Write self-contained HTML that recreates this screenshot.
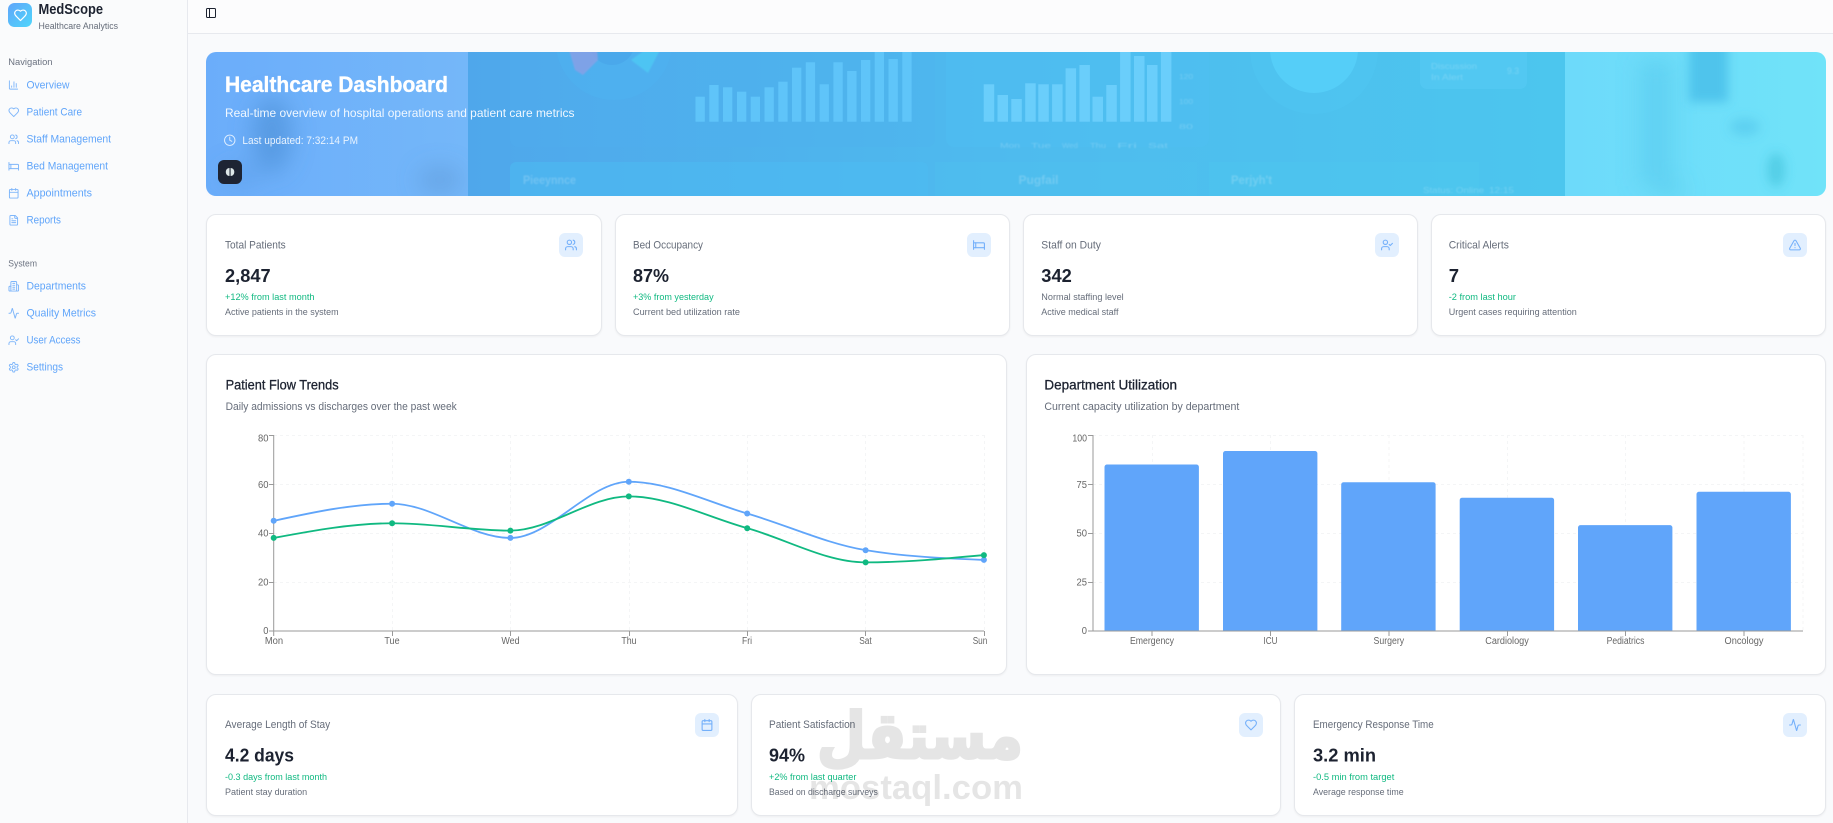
<!DOCTYPE html>
<html lang="en">
<head>
<meta charset="utf-8">
<title>MedScope - Healthcare Dashboard</title>
<style>
html,body{margin:0;padding:0;width:1833px;height:823px;overflow:hidden;background:#f9fafc;font-family:"Liberation Sans",sans-serif}
.side{position:absolute;left:0;top:0;width:187px;height:823px;background:#fafbfc;border-right:1px solid #e7e9ee}
.head{position:absolute;left:188px;top:0;width:1645px;height:33px;background:#fcfcfd;border-bottom:1px solid #e7e9ee}
.card{position:absolute;box-sizing:border-box;background:#fff;border:1px solid #e6e8ec;border-radius:10px;box-shadow:0 1px 2px rgba(0,0,0,.05)}
.b{position:absolute;width:24px;height:24px;border-radius:6px;background:#e2effe}
svg.o{position:absolute;left:0;top:0}
svg text{font-family:"Liberation Sans",sans-serif}
.nav{font-size:11.2px;fill:#60a5fa}
.sec{font-size:9.6px;fill:#6b7280}
.st{font-size:10.8px;fill:#666d7a}
.val{font-size:18.4px;font-weight:700;fill:#1c2230}
.ch{font-size:9.6px;fill:#10b981}
.ds{font-size:9.6px;fill:#666d7a}
.ct{font-size:14px;fill:#1c2230;stroke:#1c2230;stroke-width:.3}
.cs{font-size:10.6px;fill:#666d7a}
.tk{font-size:10px;fill:#666}
.i{fill:none;stroke:#60a5fa;stroke-width:2;stroke-linecap:round;stroke-linejoin:round}
.g{stroke:#f4f5f6;stroke-width:1;stroke-dasharray:3 3;fill:none}
.ax{stroke:#9a9a9a;stroke-width:1;fill:none}
</style>
</head>
<body>
<div class="side"></div>
<div class="head"></div>

<div class="card" style="left:206px;top:214px;width:396px;height:122px"></div>
<div class="card" style="left:615px;top:214px;width:395px;height:122px"></div>
<div class="card" style="left:1023px;top:214px;width:395px;height:122px"></div>
<div class="card" style="left:1431px;top:214px;width:395px;height:122px"></div>
<div class="b" style="left:559px;top:233px"></div>
<div class="b" style="left:967px;top:233px"></div>
<div class="b" style="left:1375px;top:233px"></div>
<div class="b" style="left:1783px;top:233px"></div>

<div class="card" style="left:206px;top:354px;width:801px;height:321px"></div>
<div class="card" style="left:1026px;top:354px;width:800px;height:321px"></div>

<div class="card" style="left:206px;top:694px;width:532px;height:122px"></div>
<div class="card" style="left:751px;top:694px;width:530px;height:122px"></div>
<div class="card" style="left:1294px;top:694px;width:532px;height:122px"></div>
<div class="b" style="left:695px;top:713px"></div>
<div class="b" style="left:1239px;top:713px"></div>
<div class="b" style="left:1783px;top:713px"></div>

<svg class="o" width="1833" height="823" viewBox="0 0 1833 823" xmlns="http://www.w3.org/2000/svg">
<defs>
<symbol id="chart" viewBox="0 0 24 24"><path d="M3 3v16a2 2 0 0 0 2 2h16"/><path d="M18 17V9"/><path d="M13 17V5"/><path d="M8 17v-3"/></symbol>
<symbol id="heart" viewBox="0 0 24 24"><path d="M19 14c1.49-1.46 3-3.21 3-5.5A5.5 5.5 0 0 0 16.5 3c-1.76 0-3 .5-4.5 2-1.5-1.5-2.74-2-4.5-2A5.5 5.5 0 0 0 2 8.5c0 2.3 1.5 4.05 3 5.5l7 7Z"/></symbol>
<symbol id="users" viewBox="0 0 24 24"><path d="M16 21v-2a4 4 0 0 0-4-4H6a4 4 0 0 0-4 4v2"/><circle cx="9" cy="7" r="4"/><path d="M22 21v-2a4 4 0 0 0-3-3.87"/><path d="M16 3.13a4 4 0 0 1 0 7.75"/></symbol>
<symbol id="bed" viewBox="0 0 24 24"><path d="M2 4v16"/><path d="M2 8h18a2 2 0 0 1 2 2v10"/><path d="M2 17h20"/><path d="M6 8v9"/></symbol>
<symbol id="cal" viewBox="0 0 24 24"><path d="M8 2v4"/><path d="M16 2v4"/><rect x="3" y="4" width="18" height="18" rx="2"/><path d="M3 10h18"/></symbol>
<symbol id="file" viewBox="0 0 24 24"><path d="M15 2H6a2 2 0 0 0-2 2v16a2 2 0 0 0 2 2h12a2 2 0 0 0 2-2V7Z"/><path d="M14 2v4a2 2 0 0 0 2 2h4"/><path d="M10 9H8"/><path d="M16 13H8"/><path d="M16 17H8"/></symbol>
<symbol id="bld" viewBox="0 0 24 24"><path d="M6 22V4a2 2 0 0 1 2-2h8a2 2 0 0 1 2 2v18Z"/><path d="M6 12H4a2 2 0 0 0-2 2v6a2 2 0 0 0 2 2h2"/><path d="M18 9h2a2 2 0 0 1 2 2v9a2 2 0 0 1-2 2h-2"/><path d="M10 6h4"/><path d="M10 10h4"/><path d="M10 14h4"/><path d="M10 18h4"/></symbol>
<symbol id="act" viewBox="0 0 24 24"><path d="M22 12h-2.48a2 2 0 0 0-1.93 1.46l-2.35 8.36a.25.25 0 0 1-.48 0L9.24 2.18a.25.25 0 0 0-.48 0l-2.35 8.36A2 2 0 0 1 4.49 12H2"/></symbol>
<symbol id="uchk" viewBox="0 0 24 24"><path d="M16 21v-2a4 4 0 0 0-4-4H6a4 4 0 0 0-4 4v2"/><circle cx="9" cy="7" r="4"/><path d="m16 11 2 2 4-4"/></symbol>
<symbol id="gear" viewBox="0 0 24 24"><path d="M12.22 2h-.44a2 2 0 0 0-2 2v.18a2 2 0 0 1-1 1.73l-.43.25a2 2 0 0 1-2 0l-.15-.08a2 2 0 0 0-2.73.73l-.22.38a2 2 0 0 0 .73 2.73l.15.1a2 2 0 0 1 1 1.72v.51a2 2 0 0 1-1 1.74l-.15.09a2 2 0 0 0-.73 2.73l.22.38a2 2 0 0 0 2.73.73l.15-.08a2 2 0 0 1 2 0l.43.25a2 2 0 0 1 1 1.73V20a2 2 0 0 0 2 2h.44a2 2 0 0 0 2-2v-.18a2 2 0 0 1 1-1.73l.43-.25a2 2 0 0 1 2 0l.15.08a2 2 0 0 0 2.73-.73l.22-.39a2 2 0 0 0-.73-2.73l-.15-.08a2 2 0 0 1-1-1.74v-.5a2 2 0 0 1 1-1.74l.15-.09a2 2 0 0 0 .73-2.73l-.22-.38a2 2 0 0 0-2.73-.73l-.15.08a2 2 0 0 1-2 0l-.43-.25a2 2 0 0 1-1-1.73V4a2 2 0 0 0-2-2z"/><circle cx="12" cy="12" r="3"/></symbol>
<symbol id="alert" viewBox="0 0 24 24"><path d="m21.73 18-8-14a2 2 0 0 0-3.48 0l-8 14A2 2 0 0 0 4 21h16a2 2 0 0 0 1.73-3"/><path d="M12 9v4"/><path d="M12 17h.01"/></symbol>
<symbol id="clock" viewBox="0 0 24 24"><circle cx="12" cy="12" r="10"/><path d="M12 6v6l4 2"/></symbol>
<symbol id="panel" viewBox="0 0 24 24"><rect x="3" y="3" width="18" height="18" rx="2"/><path d="M9 3v18"/></symbol>

<linearGradient id="logoG" x1="0" y1="0" x2="1" y2="1"><stop offset="0" stop-color="#60a5fa"/><stop offset="1" stop-color="#4fd6fb"/></linearGradient>
<linearGradient id="heroOuter" x1="0" y1="0" x2="1" y2="0"><stop offset="0" stop-color="#6badfa"/><stop offset=".16" stop-color="#74b7f9"/><stop offset=".84" stop-color="#6ddafa"/><stop offset="1" stop-color="#70e3f9"/></linearGradient>
<linearGradient id="heroImg" x1="0" y1="0" x2="1" y2="0"><stop offset="0" stop-color="#4fa7eb"/><stop offset=".5" stop-color="#4ebbee"/><stop offset="1" stop-color="#4cc6ee"/></linearGradient>
<clipPath id="heroClip"><rect x="206" y="52" width="1620" height="144" rx="10"/></clipPath>
<filter id="bl" x="-100%" y="-100%" width="300%" height="300%"><feGaussianBlur stdDeviation="11"/></filter>
<filter id="bl3" x="-50%" y="-50%" width="200%" height="200%"><feGaussianBlur stdDeviation="5"/></filter>
<filter id="bl2" x="-20%" y="-20%" width="140%" height="140%"><feGaussianBlur stdDeviation=".7"/></filter>
</defs>

<!-- Sidebar -->
<rect x="8" y="3" width="24" height="24" rx="6.5" fill="url(#logoG)"/>
<use href="#heart" x="13.5" y="8.3" width="14" height="14" style="fill:none;stroke:#fff;stroke-width:2;stroke-linecap:round;stroke-linejoin:round"/>
<text x="38.5" y="14" font-size="14.4" font-weight="700" fill="#1c2230" textLength="64.5" lengthAdjust="spacingAndGlyphs">MedScope</text>
<text x="38.5" y="29" font-size="9.6" fill="#666d7a" textLength="79.5" lengthAdjust="spacingAndGlyphs">Healthcare Analytics</text>

<text class="sec" x="8.3" y="65" textLength="44.2" lengthAdjust="spacingAndGlyphs">Navigation</text>
<g class="i" opacity=".8">
<use href="#chart" x="8" y="79.5" width="11" height="11"/>
<use href="#heart" x="8" y="106.5" width="11.5" height="11.5"/>
<use href="#users" x="8" y="133.5" width="11.5" height="11.5"/>
<use href="#bed" x="8" y="160.5" width="11.5" height="11.5"/>
<use href="#cal" x="8" y="187.5" width="11.5" height="11.5"/>
<use href="#file" x="8" y="214.5" width="11.5" height="11.5"/>
<use href="#bld" x="8" y="280.5" width="11.5" height="11.5"/>
<use href="#act" x="8" y="307.5" width="11.5" height="11.5"/>
<use href="#uchk" x="8" y="334.5" width="11.5" height="11.5"/>
<use href="#gear" x="8" y="361.5" width="11.5" height="11.5"/>
</g>
<text class="nav" x="26.5" y="88.5" textLength="43" lengthAdjust="spacingAndGlyphs">Overview</text>
<text class="nav" x="26.5" y="115.5" textLength="55.5" lengthAdjust="spacingAndGlyphs">Patient Care</text>
<text class="nav" x="26.5" y="142.5" textLength="84.5" lengthAdjust="spacingAndGlyphs">Staff Management</text>
<text class="nav" x="26.5" y="169.5" textLength="81.5" lengthAdjust="spacingAndGlyphs">Bed Management</text>
<text class="nav" x="26.5" y="196.5" textLength="65.5" lengthAdjust="spacingAndGlyphs">Appointments</text>
<text class="nav" x="26.5" y="223.5" textLength="34.5" lengthAdjust="spacingAndGlyphs">Reports</text>
<text class="sec" x="8.3" y="266.5" textLength="28.7" lengthAdjust="spacingAndGlyphs">System</text>
<text class="nav" x="26.5" y="289.5" textLength="59.5" lengthAdjust="spacingAndGlyphs">Departments</text>
<text class="nav" x="26.5" y="316.5" textLength="69.5" lengthAdjust="spacingAndGlyphs">Quality Metrics</text>
<text class="nav" x="26.5" y="343.5" textLength="54" lengthAdjust="spacingAndGlyphs">User Access</text>
<text class="nav" x="26.5" y="370.5" textLength="36.5" lengthAdjust="spacingAndGlyphs">Settings</text>

<use href="#panel" x="205" y="7" width="12" height="12" style="fill:none;stroke:#1c2230;stroke-width:2;stroke-linecap:round;stroke-linejoin:round"/>

<!-- Hero -->
<g clip-path="url(#heroClip)">
<rect x="206" y="52" width="1620" height="144" fill="url(#heroOuter)"/>
<g filter="url(#bl)">
<ellipse cx="272" cy="135" rx="20" ry="38" fill="#4f93da" opacity=".7"/>
<ellipse cx="240" cy="175" rx="22" ry="12" fill="#4f93da" opacity=".3"/>
<ellipse cx="440" cy="180" rx="22" ry="14" fill="#5b94d0" opacity=".45"/>
<rect x="1640" y="60" width="32" height="126" fill="#53c6ec" opacity=".5"/>
<ellipse cx="1670" cy="190" rx="14" ry="10" fill="#4fc4e6" opacity=".4"/>
</g>
<g filter="url(#bl3)">
<rect x="1689" y="40" width="39" height="62" fill="#49bde9" opacity=".8"/>
<ellipse cx="1745" cy="127" rx="15" ry="9" fill="#4abee6" opacity=".45"/>
<ellipse cx="1776" cy="170" rx="9" ry="17" fill="#3abcd4" opacity=".5"/>
</g>
<rect x="468" y="52" width="1097" height="144" fill="url(#heroImg)"/>
<!-- image contents -->
<rect x="510" y="162" width="418" height="40" rx="6" fill="#4cbcf2" opacity=".55"/>
<rect x="935" y="162" width="262" height="40" fill="#4fc2f0" opacity=".3"/>
<rect x="1209" y="162" width="270" height="40" fill="#4fcaf0" opacity=".3"/>
<rect x="510" y="40" width="425" height="107" rx="8" fill="#4fafef" opacity=".25"/>
<rect x="946" y="40" width="263" height="107" rx="8" fill="#51c0f4" opacity=".35"/>
<circle cx="614" cy="42" r="58" fill="#4fb0f0" opacity=".7"/>
<circle cx="612" cy="42" r="23" fill="#4aa6ea" opacity=".8"/>
<path d="M569 50 L597 50 L598 60 L583 75 L575 70 Z" fill="#8aa0e6" opacity=".8" filter="url(#bl2)"/>
<path d="M631 60 L645 50 L660 50 L648 73 Z" fill="#4dc4f3" filter="url(#bl2)"/>
<circle cx="1314" cy="50" r="64" fill="#50c8f3" opacity=".35"/>
<circle cx="1314" cy="49" r="44" fill="#55cef8"/>
<rect x="1420" y="40" width="107" height="49" rx="7" fill="#58cbf5" opacity=".5"/>
<g fill="#62c8fc" opacity=".85">
<rect x="695.5" y="96.7" width="9.3" height="25"/><rect x="709.3" y="85" width="9.3" height="36.7"/><rect x="723" y="87.3" width="9.3" height="34.4"/><rect x="737" y="91.7" width="9.3" height="30"/><rect x="750.7" y="96.7" width="9.3" height="25"/><rect x="764.5" y="87.3" width="9.3" height="34.4"/><rect x="778.3" y="81.7" width="9.3" height="40"/><rect x="792" y="67.7" width="9.3" height="54"/><rect x="805.8" y="62.3" width="9.3" height="59.4"/><rect x="819.6" y="84.3" width="9.3" height="37.4"/><rect x="833.4" y="62.3" width="9.3" height="59.4"/><rect x="847.2" y="71" width="9.3" height="50.7"/><rect x="861" y="60" width="9.3" height="61.7"/><rect x="874.7" y="52" width="9.3" height="69.7"/><rect x="888.5" y="59" width="9.3" height="62.7"/><rect x="902.3" y="52" width="9.3" height="69.7"/>
</g>
<g fill="#6ed0fd" opacity=".9">
<rect x="983.7" y="84.3" width="10.5" height="37.4"/><rect x="997.5" y="95" width="10.5" height="26.7"/><rect x="1011.3" y="99" width="10.5" height="22.7"/><rect x="1025.2" y="83.3" width="10.5" height="38.4"/><rect x="1038.3" y="84.3" width="10.5" height="37.4"/><rect x="1052.1" y="84.3" width="10.5" height="37.4"/><rect x="1065.6" y="68.3" width="10.5" height="53.4"/><rect x="1079.4" y="65" width="10.5" height="56.7"/><rect x="1092.5" y="96.7" width="10.5" height="25"/><rect x="1106.3" y="85" width="10.5" height="36.7"/><rect x="1120.1" y="52" width="10.5" height="69.7"/><rect x="1134" y="56" width="10.5" height="65.7"/><rect x="1147" y="65" width="10.5" height="56.7"/><rect x="1160.9" y="52" width="10.5" height="69.7"/>
</g>
<g filter="url(#bl2)" fill="#fff" opacity=".2">
<text x="523" y="184" font-size="11.5" font-weight="700" textLength="53" lengthAdjust="spacingAndGlyphs">Pieeynnce</text>
<text x="1018.5" y="184" font-size="11.5" font-weight="700" textLength="40" lengthAdjust="spacingAndGlyphs">Pugfail</text>
<text x="1231" y="184" font-size="11.5" font-weight="700" textLength="41" lengthAdjust="spacingAndGlyphs">Perjyh't</text>
<text x="1431" y="69" font-size="8" textLength="46" lengthAdjust="spacingAndGlyphs">Discussion</text>
<text x="1431" y="80" font-size="8" textLength="32" lengthAdjust="spacingAndGlyphs">In Alert</text>
<text x="1507" y="74" font-size="9" textLength="12" lengthAdjust="spacingAndGlyphs">9.3</text>
<text x="1423" y="193" font-size="8" textLength="61" lengthAdjust="spacingAndGlyphs">Status: Online</text>
<text x="1489" y="193" font-size="8" textLength="25" lengthAdjust="spacingAndGlyphs">12:15</text>
<text x="1000" y="148" font-size="7" textLength="20" lengthAdjust="spacingAndGlyphs">Mon</text>
<text x="1031" y="148" font-size="7" textLength="20" lengthAdjust="spacingAndGlyphs">Tue</text>
<text x="1062" y="148" font-size="7" textLength="16" lengthAdjust="spacingAndGlyphs">Wed</text>
<text x="1090" y="148" font-size="7" textLength="16" lengthAdjust="spacingAndGlyphs">Thu</text>
<text x="1117" y="148" font-size="7" textLength="20" lengthAdjust="spacingAndGlyphs">Fri</text>
<text x="1148" y="148" font-size="7" textLength="20" lengthAdjust="spacingAndGlyphs">Sat</text>
<text x="1179" y="79" font-size="7" textLength="14" lengthAdjust="spacingAndGlyphs">120</text>
<text x="1179" y="104" font-size="7" textLength="14" lengthAdjust="spacingAndGlyphs">100</text>
<text x="1179" y="129" font-size="7" textLength="14" lengthAdjust="spacingAndGlyphs">80</text>
</g>
</g>
<text x="225" y="92" font-size="22" font-weight="700" fill="#fff" stroke="#fff" stroke-width=".35" textLength="223" lengthAdjust="spacingAndGlyphs">Healthcare Dashboard</text>
<text x="225" y="117" font-size="11.8" fill="#f1f8ff" textLength="349.5" lengthAdjust="spacingAndGlyphs">Real-time overview of hospital operations and patient care metrics</text>
<use href="#clock" x="223.5" y="134" width="12.5" height="12.5" style="fill:none;stroke:#e3f0ff;stroke-width:1.8;stroke-linecap:round;stroke-linejoin:round"/>
<text x="242.4" y="144" font-size="10.6" fill="#e8f3ff" textLength="115.6" lengthAdjust="spacingAndGlyphs">Last updated: 7:32:14 PM</text>
<rect x="218" y="160" width="24" height="24" rx="6" fill="#1e2433"/>
<g fill="#dfe8e8">
<path d="M229.5 168c-2 0-3.6 1.4-3.7 3.9 0 2.6 1.7 4.1 3.7 4.1z"/>
<path d="M230.6 168c2 0 3.6 1.4 3.7 3.9 0 2.6-1.7 4.1-3.7 4.1z"/>
</g>

<!-- Stat cards row 1 -->
<text class="st" x="225" y="248.5" textLength="60.7" lengthAdjust="spacingAndGlyphs">Total Patients</text>
<text class="val" x="225" y="281.8" textLength="45.6" lengthAdjust="spacingAndGlyphs">2,847</text>
<text class="ch" x="225" y="300" textLength="89.5" lengthAdjust="spacingAndGlyphs">+12% from last month</text>
<text class="ds" x="225" y="315" textLength="113.6" lengthAdjust="spacingAndGlyphs">Active patients in the system</text>

<text class="st" x="633" y="248.5" textLength="70" lengthAdjust="spacingAndGlyphs">Bed Occupancy</text>
<text class="val" x="633" y="281.8" textLength="36" lengthAdjust="spacingAndGlyphs">87%</text>
<text class="ch" x="633" y="300" textLength="80.6" lengthAdjust="spacingAndGlyphs">+3% from yesterday</text>
<text class="ds" x="633" y="315" textLength="107" lengthAdjust="spacingAndGlyphs">Current bed utilization rate</text>

<text class="st" x="1041.3" y="248.5" textLength="59.6" lengthAdjust="spacingAndGlyphs">Staff on Duty</text>
<text class="val" x="1041.3" y="281.8" textLength="30.5" lengthAdjust="spacingAndGlyphs">342</text>
<text class="ds" x="1041.3" y="300" textLength="82.4" lengthAdjust="spacingAndGlyphs">Normal staffing level</text>
<text class="ds" x="1041.3" y="315" textLength="77.2" lengthAdjust="spacingAndGlyphs">Active medical staff</text>

<text class="st" x="1448.7" y="248.5" textLength="60.2" lengthAdjust="spacingAndGlyphs">Critical Alerts</text>
<text class="val" x="1448.7" y="281.8" textLength="10.3" lengthAdjust="spacingAndGlyphs">7</text>
<text class="ch" x="1448.7" y="300" textLength="67.3" lengthAdjust="spacingAndGlyphs">-2 from last hour</text>
<text class="ds" x="1448.7" y="315" textLength="128.1" lengthAdjust="spacingAndGlyphs">Urgent cases requiring attention</text>

<g class="i" opacity=".85">
<use href="#users" x="564.5" y="238.5" width="13" height="13"/>
<use href="#bed" x="972.5" y="238.5" width="13" height="13"/>
<use href="#uchk" x="1380.5" y="238.5" width="13" height="13"/>
<use href="#alert" x="1788.5" y="238.5" width="13" height="13"/>
<use href="#cal" x="700.5" y="718.5" width="13" height="13"/>
<use href="#heart" x="1244.5" y="718.5" width="13" height="13"/>
<use href="#act" x="1788.5" y="718.5" width="13" height="13"/>
</g>

<!-- Line chart -->
<text class="ct" x="225.6" y="389.3" textLength="113" lengthAdjust="spacingAndGlyphs">Patient Flow Trends</text>
<text class="cs" x="225.6" y="410" textLength="231.2" lengthAdjust="spacingAndGlyphs">Daily admissions vs discharges over the past week</text>
<path class="g" d="M274 435.5H984M274 484.5H984M274 533.5H984M274 582.5H984M392.5 435V631M510.5 435V631M629.5 435V631M747.5 435V631M865.5 435V631M984.5 435V631"/>
<path class="ax" d="M273.7 435V631M269 435.5h4.7M269 484.5h4.7M269 533.5h4.7M269 582.5h4.7M269 631h4.7M273.7 631H984M273.7 631v5M392.5 631v5M510.5 631v5M629.5 631v5M747.5 631v5M865.5 631v5M984.5 631v5"/>
<g class="tk" text-anchor="end">
<text x="268.5" y="441.5" textLength="10.5" lengthAdjust="spacingAndGlyphs">80</text>
<text x="268.5" y="488" textLength="10.5" lengthAdjust="spacingAndGlyphs">60</text>
<text x="268.5" y="536.7" textLength="10.5" lengthAdjust="spacingAndGlyphs">40</text>
<text x="268.5" y="585.7" textLength="10.5" lengthAdjust="spacingAndGlyphs">20</text>
<text x="268.5" y="634" textLength="5.2" lengthAdjust="spacingAndGlyphs">0</text>
</g>
<g class="tk" text-anchor="middle">
<text x="274" y="644" textLength="18.3" lengthAdjust="spacingAndGlyphs">Mon</text>
<text x="392" y="644" textLength="15.2" lengthAdjust="spacingAndGlyphs">Tue</text>
<text x="510.5" y="644" textLength="18.3" lengthAdjust="spacingAndGlyphs">Wed</text>
<text x="629" y="644" textLength="15.2" lengthAdjust="spacingAndGlyphs">Thu</text>
<text x="747" y="644" textLength="10" lengthAdjust="spacingAndGlyphs">Fri</text>
<text x="865.5" y="644" textLength="12.5" lengthAdjust="spacingAndGlyphs">Sat</text>
<text x="980" y="644" textLength="14.6" lengthAdjust="spacingAndGlyphs">Sun</text>
</g>
<g transform="translate(273.7,630.8) scale(118.37,-2.4437)" fill="none" stroke-width="1.8">
<path vector-effect="non-scaling-stroke" stroke="#60a5fa" d="M0 45C.333 48.5 .667 52 1 52C1.333 52 1.667 38 2 38C2.333 38 2.667 61 3 61C3.333 61 3.667 52.667 4 48C4.333 43.333 4.667 35.667 5 33C5.333 30.333 5.667 29.667 6 29"/>
<path vector-effect="non-scaling-stroke" stroke="#10b981" d="M0 38C.333 41 .667 44 1 44C1.333 44 1.667 41 2 41C2.333 41 2.667 55 3 55C3.333 55 3.667 46.5 4 42C4.333 37.5 4.667 28 5 28C5.333 28 5.667 29.5 6 31"/>
</g>
<g fill="#60a5fa">
<circle cx="273.7" cy="520.8" r="3"/><circle cx="392.1" cy="503.7" r="3"/><circle cx="510.4" cy="537.9" r="3"/><circle cx="628.8" cy="481.7" r="3"/><circle cx="747.2" cy="513.5" r="3"/><circle cx="865.6" cy="550.2" r="3"/><circle cx="983.9" cy="559.9" r="3"/>
</g>
<g fill="#10b981">
<circle cx="273.7" cy="537.9" r="3"/><circle cx="392.1" cy="523.3" r="3"/><circle cx="510.4" cy="530.6" r="3"/><circle cx="628.8" cy="496.4" r="3"/><circle cx="747.2" cy="528.2" r="3"/><circle cx="865.6" cy="562.4" r="3"/><circle cx="983.9" cy="555.1" r="3"/>
</g>

<!-- Bar chart -->
<text class="ct" x="1044.4" y="389.3" textLength="132.6" lengthAdjust="spacingAndGlyphs">Department Utilization</text>
<text class="cs" x="1044.4" y="410" textLength="194.9" lengthAdjust="spacingAndGlyphs">Current capacity utilization by department</text>
<path class="g" d="M1093 435.5H1803M1093 484.5H1803M1093 533.5H1803M1093 582.5H1803M1152.5 435V631M1270.5 435V631M1389 435V631M1507.5 435V631M1625.5 435V631M1744 435V631M1803 435V631"/>
<g fill="#60a5fa">
<path d="M1104.5 631V467a2.5 2.5 0 0 1 2.5-2.5h89.4a2.5 2.5 0 0 1 2.5 2.5V631z"/>
<path d="M1223 631V453.5a2.5 2.5 0 0 1 2.5-2.5h89.4a2.5 2.5 0 0 1 2.5 2.5V631z"/>
<path d="M1341.2 631V484.7a2.5 2.5 0 0 1 2.5-2.5h89.4a2.5 2.5 0 0 1 2.5 2.5V631z"/>
<path d="M1459.7 631V500.2a2.5 2.5 0 0 1 2.5-2.5h89.4a2.5 2.5 0 0 1 2.5 2.5V631z"/>
<path d="M1578 631V527.6a2.5 2.5 0 0 1 2.5-2.5h89.4a2.5 2.5 0 0 1 2.5 2.5V631z"/>
<path d="M1696.5 631V494.3a2.5 2.5 0 0 1 2.5-2.5h89.4a2.5 2.5 0 0 1 2.5 2.5V631z"/>
</g>
<path class="ax" d="M1093 435V631M1088 435.5h5M1088 484.5h5M1088 533.5h5M1088 582.5h5M1088 631h5M1093 631H1803M1152 631v5M1270.5 631v5M1389 631v5M1507.5 631v5M1625.5 631v5M1744 631v5"/>
<g class="tk" text-anchor="end">
<text x="1087" y="441.5" textLength="14.6" lengthAdjust="spacingAndGlyphs">100</text>
<text x="1087" y="488" textLength="10.5" lengthAdjust="spacingAndGlyphs">75</text>
<text x="1087" y="536.7" textLength="10.5" lengthAdjust="spacingAndGlyphs">50</text>
<text x="1087" y="585.7" textLength="10.5" lengthAdjust="spacingAndGlyphs">25</text>
<text x="1087" y="634" textLength="5.2" lengthAdjust="spacingAndGlyphs">0</text>
</g>
<g class="tk" text-anchor="middle">
<text x="1152" y="644" textLength="44" lengthAdjust="spacingAndGlyphs">Emergency</text>
<text x="1270.5" y="644" textLength="14" lengthAdjust="spacingAndGlyphs">ICU</text>
<text x="1388.8" y="644" textLength="30.6" lengthAdjust="spacingAndGlyphs">Surgery</text>
<text x="1507" y="644" textLength="43.5" lengthAdjust="spacingAndGlyphs">Cardiology</text>
<text x="1625.5" y="644" textLength="37.8" lengthAdjust="spacingAndGlyphs">Pediatrics</text>
<text x="1744" y="644" textLength="38.9" lengthAdjust="spacingAndGlyphs">Oncology</text>
</g>

<!-- Bottom cards -->
<text class="st" x="225" y="727.8" textLength="105.2" lengthAdjust="spacingAndGlyphs">Average Length of Stay</text>
<text class="val" x="225" y="761.5" textLength="69" lengthAdjust="spacingAndGlyphs">4.2 days</text>
<text class="ch" x="225" y="780" textLength="102" lengthAdjust="spacingAndGlyphs">-0.3 days from last month</text>
<text class="ds" x="225" y="795" textLength="82.2" lengthAdjust="spacingAndGlyphs">Patient stay duration</text>

<text class="st" x="769" y="727.8" textLength="86.3" lengthAdjust="spacingAndGlyphs">Patient Satisfaction</text>
<text class="val" x="769" y="761.5" textLength="36" lengthAdjust="spacingAndGlyphs">94%</text>
<text class="ch" x="769" y="780" textLength="87.4" lengthAdjust="spacingAndGlyphs">+2% from last quarter</text>
<text class="ds" x="769" y="795" textLength="108.8" lengthAdjust="spacingAndGlyphs">Based on discharge surveys</text>

<text class="st" x="1313" y="727.8" textLength="120.7" lengthAdjust="spacingAndGlyphs">Emergency Response Time</text>
<text class="val" x="1313" y="761.5" textLength="63" lengthAdjust="spacingAndGlyphs">3.2 min</text>
<text class="ch" x="1313" y="780" textLength="81.3" lengthAdjust="spacingAndGlyphs">-0.5 min from target</text>
<text class="ds" x="1313" y="795" textLength="90.6" lengthAdjust="spacingAndGlyphs">Average response time</text>

<!-- Watermark -->
<g fill="#000" stroke="#000" opacity=".1" font-weight="700">
<text x="817" y="758" text-anchor="end" font-size="64" stroke-width="3" style="font-family:'DejaVu Sans',sans-serif" direction="rtl" textLength="206" lengthAdjust="spacingAndGlyphs">مستقل</text>
<text x="809" y="799" font-size="34" stroke-width="0" textLength="214" lengthAdjust="spacingAndGlyphs">mostaql.com</text>
</g>
</svg>
</body>
</html>
